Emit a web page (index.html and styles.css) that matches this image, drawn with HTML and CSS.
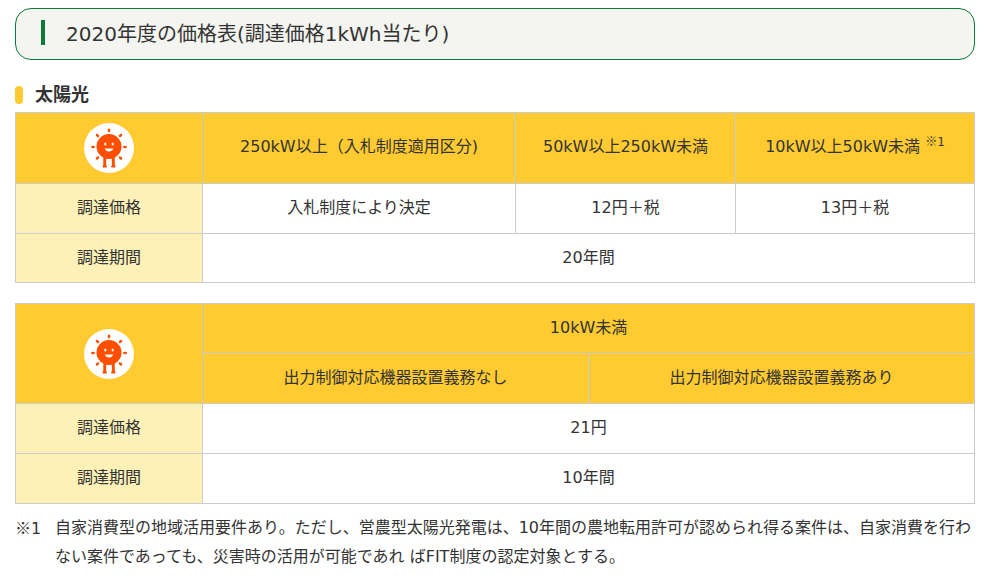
FILE: index.html
```html
<!DOCTYPE html>
<html lang="ja">
<head>
<meta charset="utf-8">
<title>2020年度の価格表</title>
<link rel="stylesheet" href="styles.css">
</head>
<body>
<svg class="defs" width="0" height="0" aria-hidden="true">
  <symbol id="sun" viewBox="0 0 50 50">
    <circle cx="25" cy="25" r="25" fill="#fff"/>
    <g fill="#ff4e00">
      <circle cx="25" cy="23.500" r="12.500"/>
      <ellipse cx="25" cy="7.500" rx="1.300" ry="2"/>
      <ellipse cx="13.500" cy="12.500" rx="2" ry="1.400" transform="rotate(45 13.500 12.500)"/>
      <ellipse cx="36.500" cy="12.500" rx="2" ry="1.400" transform="rotate(-45 36.500 12.500)"/>
      <ellipse cx="9" cy="24" rx="2" ry="1.300"/>
      <ellipse cx="41" cy="24" rx="2" ry="1.300"/>
      <ellipse cx="13.500" cy="35" rx="2" ry="1.400" transform="rotate(-45 13.500 35)"/>
      <ellipse cx="36.500" cy="35" rx="2" ry="1.400" transform="rotate(45 36.500 35)"/>
      <path d="M19.300 34h3l-.2 8a2 2 0 0 1 .6 2.600h-3.900a2 2 0 0 1 .5-2.600zM27.700 34h3l.1 8a2 2 0 0 1 .5 2.600h-3.900a2 2 0 0 1 .6-2.600z"/>
    </g>
    <g fill="#fff">
      <ellipse cx="21.300" cy="21" rx="1.100" ry="1.500"/>
      <ellipse cx="28.700" cy="21" rx="1.100" ry="1.500"/>
      <path d="M20.800 25.600h8.400c-.5 2-2.200 2.900-4.200 2.900s-3.700-.9-4.200-2.900z"/>
    </g>
  </symbol>
</svg>
<main class="page">
  <h2 class="title"><span class="title-text">2020年度の価格表(調達価格1kWh当たり)</span></h2>
  <h3 class="sub">太陽光</h3>

  <table class="price first">
    <colgroup><col class="c0"><col class="c1"><col class="c2"><col class="c3"></colgroup>
    <tr class="head h71">
      <th class="corner"><svg class="sun"><use href="#sun"/></svg></th>
      <th>250kW以上（入札制度適用区分)</th>
      <th>50kW以上250kW未満</th>
      <th>10kW以上50kW未満 <sup><span class="cjk">※</span>1</sup></th>
    </tr>
    <tr class="h50">
      <th class="label">調達価格</th>
      <td>入札制度により決定</td>
      <td>12円＋税</td>
      <td>13円＋税</td>
    </tr>
    <tr class="h49">
      <th class="label">調達期間</th>
      <td colspan="3">20年間</td>
    </tr>
  </table>

  <table class="price second">
    <colgroup><col class="c0"><col class="d1"><col class="d2"></colgroup>
    <tr class="head h50">
      <th class="corner" rowspan="2"><svg class="sun"><use href="#sun"/></svg></th>
      <th colspan="2">10kW未満</th>
    </tr>
    <tr class="head h50">
      <th>出力制御対応機器設置義務なし</th>
      <th>出力制御対応機器設置義務あり</th>
    </tr>
    <tr class="h50">
      <th class="label">調達価格</th>
      <td colspan="2">21円</td>
    </tr>
    <tr class="h50">
      <th class="label">調達期間</th>
      <td colspan="2">10年間</td>
    </tr>
  </table>

  <div class="note">
    <span class="mark"><span class="cjk">※</span>1</span>
    <p>自家消費型の地域活用要件あり。ただし、営農型太陽光発電は、10年間の農地転用許可が認められ得る案件は、自家消費を行わない案件であっても、災害時の活用が可能であれ ばFIT制度の認定対象とする。</p>
  </div>
</main>
</body>
</html>
```

FILE: styles.css
```css
* { box-sizing: border-box; }
html, body { margin: 0; padding: 0; background: #fff; }
body {
  font-family: "DejaVu Sans", "Noto Sans CJK JP", sans-serif;
  font-size: 16px;
  color: #333;
  overflow: hidden;
}
.defs { position: absolute; }
.cjk { font-family: "Noto Sans CJK JP", sans-serif; }
.page { width: 960px; margin-left: 15px; padding-top: 8px; }
.title {
  height: 52px;
  margin: 0;
  padding: 11px 0 0 25px;
  border: 1px solid #0b7a3b;
  border-radius: 16px;
  background: #f4f5f0;
  font-size: 20px;
  font-weight: 400;
  line-height: 29px;
}
.title-text {
  display: block;
  height: 25px;
  padding-left: 21px;
  border-left: 4px solid #0b7a3b;
}
.sub {
  display: flex;
  align-items: center;
  gap: 12px;
  height: 18px;
  margin: 26px 0 8px;
  font-size: 18px;
  font-weight: 700;
  line-height: 18px;
}
.sub::before {
  content: "";
  width: 8px;
  height: 18px;
  border-radius: 4px;
  background: #ffcb31;
}
.price {
  width: 959px;
  table-layout: fixed;
  border-collapse: collapse;
  text-align: center;
}
.second { margin-top: 20px; }
.c0 { width: 187px; }
.c1 { width: 313px; }
.c2 { width: 220px; }
.c3 { width: 239px; }
.d1 { width: 386px; }
.d2 { width: 386px; }
.price th, .price td {
  padding: 0 0 1px;
  border: 1px solid #ccc;
  font-weight: 400;
  line-height: 24px;
}
.price .corner { padding: 0; }
.head th { background: #ffcb31; }
.price .h71 th { padding-bottom: 3px; }
.price .h71 .corner { padding: 0; }
.price .label { background: #fdf1b8; }
.h71 { height: 71px; }
.h50 { height: 50px; }
.h49 { height: 49px; }
.sun { display: block; width: 50px; height: 50px; margin: 0 auto; }
sup { font-size: 12px; line-height: 0; vertical-align: 6px; }
.note { display: flex; margin-top: 9px; line-height: 29px; }
.mark { flex: 0 0 40px; }
.note p { margin: 0; }
```
